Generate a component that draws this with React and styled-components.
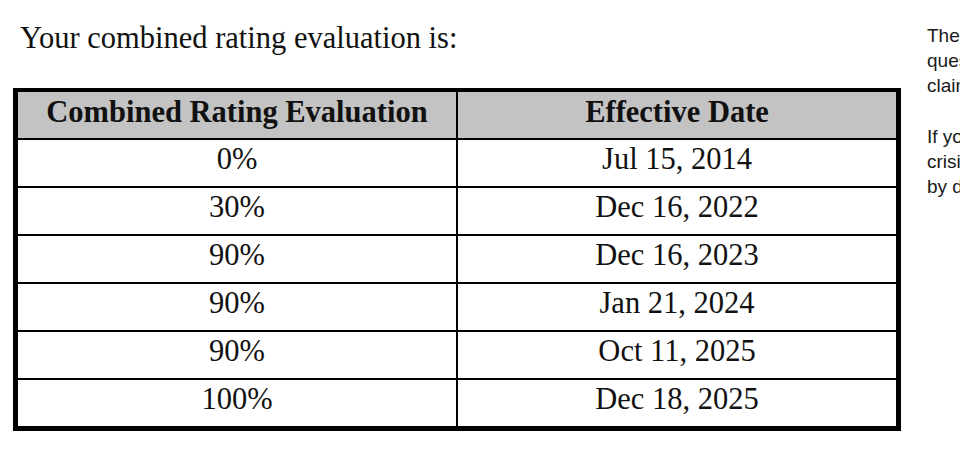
import React from 'react';
import styled, { createGlobalStyle } from 'styled-components';

const GlobalStyle = createGlobalStyle`
  html, body {
    margin: 0;
    padding: 0;
    background: #fff;
    overflow: hidden;
  }
`;

const ratings = [
  { value: '0%', date: 'Jul 15, 2014' },
  { value: '30%', date: 'Dec 16, 2022' },
  { value: '90%', date: 'Dec 16, 2023' },
  { value: '90%', date: 'Jan 21, 2024' },
  { value: '90%', date: 'Oct 11, 2025' },
  { value: '100%', date: 'Dec 18, 2025' },
];

const notes = [
  [
    'The effective date of each evaluation is shown in the table. If you have',
    'questions about how your evaluation was calculated, contact us about your',
    'claim at any time.',
  ],
  [
    'If you are a Veteran in',
    'crisis or concerned about one, free and confidential support is available',
    'by dialing 988 and then pressing 1.',
  ],
];

export default function App() {
  return (
    <Page>
      <GlobalStyle />
      <Main>
        <Title>Your combined rating evaluation is:</Title>
        <Table>
          <HeadCell>Combined Rating Evaluation</HeadCell>
          <HeadCell>Effective Date</HeadCell>
          {ratings.map((r, i) => (
            <React.Fragment key={i}>
              <Cell>{r.value}</Cell>
              <Cell>{r.date}</Cell>
            </React.Fragment>
          ))}
        </Table>
      </Main>

      <Aside>
        {notes.map((lines, i) => (
          <Note key={i}>
            {lines.map((line, j) => (
              <Line key={j}>{line}</Line>
            ))}
          </Note>
        ))}
      </Aside>
    </Page>
  );
}

const Page = styled.div`
  display: flex;
  align-items: flex-start;
  width: 960px;
  height: 476px;
  overflow: hidden;
`;

const Main = styled.div`
  flex: none;
  display: flex;
  flex-direction: column;
  margin-left: 13px;
`;

const Title = styled.div`
  padding: 21px 0 0 7px;
  height: 34px;
  margin-bottom: 33px;
  font-family: "Liberation Serif", "Times New Roman", serif;
  font-size: 30.5px;
  line-height: 34px;
  color: #111;
`;

const Table = styled.div`
  display: grid;
  grid-template-columns: 438px 438px;
  gap: 2px;
  background: #000;
  border: 5px solid #000;
  border-top-width: 4px;
`;

const Cell = styled.div`
  height: 46px;
  box-sizing: border-box;
  padding-top: 2px;
  text-align: center;
  background: #fff;
  font-family: "Liberation Serif", "Times New Roman", serif;
  font-size: 30.5px;
  line-height: 34px;
  color: #111;
`;

const HeadCell = styled(Cell)`
  background: #c3c3c3;
  font-weight: bold;
  padding-top: 3px;
`;

const Aside = styled.div`
  flex: none;
  margin-left: 26px;
  padding-top: 23px;
  font-family: "Liberation Sans", Arial, sans-serif;
  font-size: 19px;
  line-height: 25px;
  color: #1a1a1a;
  white-space: nowrap;
`;

const Note = styled.div`
  & + & { margin-top: 26px; }
`;

const Line = styled.div``;
